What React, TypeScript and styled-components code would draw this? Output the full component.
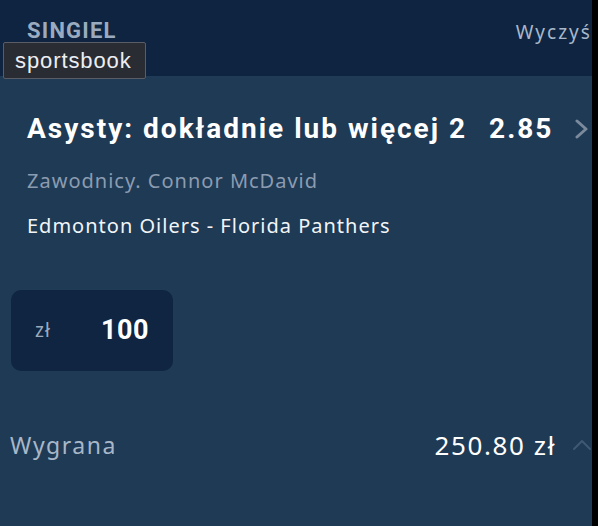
import { createGlobalStyle, styled } from "styled-components";

const GlobalStyle = createGlobalStyle`
  html, body {
    margin: 0;
    padding: 0;
    background: #000;
  }
  #root {
    width: 598px;
    height: 526px;
  }
`;

const Frame = styled.div`
  display: flex;
  width: 598px;
  height: 526px;
  background: #000;
`;

const Screen = styled.div`
  position: relative;
  display: flex;
  flex-direction: column;
  width: 592px;
  height: 526px;
  overflow: hidden;
  background: #1f3a55;
`;

const Header = styled.div`
  display: flex;
  justify-content: space-between;
  align-items: flex-start;
  height: 76px;
  box-sizing: border-box;
  padding: 18px 0 0 27px;
  background: #0e2440;
`;

const Title = styled.div`
  font-family: Roboto, sans-serif;
  font-weight: 700;
  font-size: 22px;
  color: #9aabbf;
  letter-spacing: 1.2px;
`;

const ClearLink = styled.div`
  font-family: "Noto Sans", sans-serif;
  font-size: 19px;
  letter-spacing: 2px;
  color: #a9b8c9;
  white-space: nowrap;
  margin-top: 1px;
  margin-right: -11px;
`;

const Tooltip = styled.div`
  position: absolute;
  left: 3px;
  top: 42px;
  width: 143px;
  height: 37px;
  box-sizing: border-box;
  padding: 0 0 0 11px;
  display: flex;
  align-items: center;
  background: #2a2c33;
  border: 1px solid #5a5d66;
  border-radius: 2px;
  font-family: "Liberation Sans", sans-serif;
  font-size: 22px;
  letter-spacing: 0.9px;
  color: #eceef2;
`;

const Bet = styled.div`
  display: flex;
  flex-direction: column;
  padding: 36px 0 0 27px;
`;

const SelectionRow = styled.div`
  display: flex;
  align-items: center;
  white-space: nowrap;
  font-family: Roboto, sans-serif;
  font-weight: 700;
  font-size: 28px;
  letter-spacing: 2px;
  color: #ffffff;
`;

const Odds = styled.span`
  margin-left: 22px;
`;

const Chevron = styled.svg`
  margin-left: 22px;
  flex: none;
`;

const Meta = styled.div<{ $muted?: boolean }>`
  font-family: "Noto Sans", sans-serif;
  font-size: 20px;
  letter-spacing: 1px;
  color: ${(p) => (p.$muted ? "#8c9cb0" : "#f2f5f8")};
  margin-top: ${(p) => (p.$muted ? "22px" : "18px")};
  white-space: nowrap;
`;

const StakeBox = styled.div`
  display: flex;
  align-items: center;
  width: 162px;
  height: 81px;
  margin: 51px 0 0 11px;
  box-sizing: border-box;
  padding: 0 0 2px 24px;
  background: #0f2541;
  border-radius: 10px;
`;

const Currency = styled.span`
  font-family: "Noto Sans", sans-serif;
  font-size: 19px;
  letter-spacing: 1px;
  color: #9aaabd;
  width: 66px;
`;

const Amount = styled.span`
  font-family: Roboto, sans-serif;
  font-weight: 700;
  font-size: 27px;
  letter-spacing: 0.5px;
  color: #ffffff;
`;

const WinRow = styled.div`
  display: flex;
  align-items: center;
  justify-content: space-between;
  margin-top: 56px;
  padding: 0 0 0 10px;
`;

const WinLabel = styled.span`
  font-family: "Noto Sans", sans-serif;
  font-size: 23px;
  letter-spacing: 1.5px;
  color: #a8b7c8;
`;

const WinValue = styled.div`
  display: flex;
  align-items: center;
  font-family: "Noto Sans", sans-serif;
  font-size: 26px;
  letter-spacing: 1.6px;
  color: #ffffff;
`;

const UpChevron = styled.svg`
  margin-left: 16px;
  flex: none;
`;

export default function App() {
  return (
    <>
      <GlobalStyle />
      <Frame>
        <Screen>
          <Header>
            <Title>SINGIEL</Title>
            <ClearLink>Wyczyść</ClearLink>
          </Header>
          <Tooltip>sportsbook</Tooltip>
          <Bet>
            <SelectionRow>
              Asysty: dokładnie lub więcej 2<Odds>2.85</Odds>
              <Chevron width="14" height="22" viewBox="0 0 14 22">
                <path
                  d="M2 3 L11 11 L2 19"
                  fill="none"
                  stroke="#7b8a9c"
                  strokeWidth="3"
                  strokeLinecap="round"
                  strokeLinejoin="round"
                />
              </Chevron>
            </SelectionRow>
            <Meta $muted>Zawodnicy. Connor McDavid</Meta>
            <Meta>Edmonton Oilers - Florida Panthers</Meta>
          </Bet>
          <StakeBox>
            <Currency>zł</Currency>
            <Amount>100</Amount>
          </StakeBox>
          <WinRow>
            <WinLabel>Wygrana</WinLabel>
            <WinValue>
              250.80 zł
              <UpChevron width="20" height="12" viewBox="0 0 20 12">
                <path
                  d="M2 10 L10 2 L18 10"
                  fill="none"
                  stroke="#3f5873"
                  strokeWidth="2"
                  strokeLinecap="round"
                  strokeLinejoin="round"
                />
              </UpChevron>
            </WinValue>
          </WinRow>
        </Screen>
      </Frame>
    </>
  );
}
